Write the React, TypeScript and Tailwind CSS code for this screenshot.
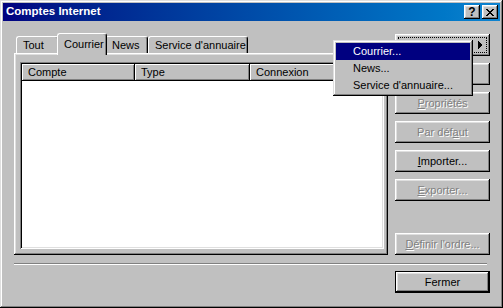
import React from 'react';

const raised =
  'shadow-[inset_-1px_-1px_#000,inset_1px_1px_#fff,inset_-2px_-2px_#808080,inset_2px_2px_#dfdfdf]';
const disabledText = 'text-[#808080] [text-shadow:1px_1px_0_#fff]';

function Tab({ label, width, selected }: { label: string; width: string; selected?: boolean }) {
  return (
    <div
      className={`${width} ${
        selected ? 'relative z-20 -mx-[2px] h-[22px] -mb-[2px] pt-[3px]' : 'h-[17px] pt-[1px]'
      } shrink-0 bg-[#c0c0c0] border-t border-l border-white border-r border-r-black rounded-t-[3px] shadow-[inset_-1px_0_#808080] pl-[6px] text-[11px] leading-[14px] whitespace-nowrap`}
    >
      {label}
    </div>
  );
}

function Button({
  children,
  disabled,
  isDefault,
  className = '',
}: {
  children: React.ReactNode;
  disabled?: boolean;
  isDefault?: boolean;
  className?: string;
}) {
  return (
    <div
      className={`w-[95px] h-[22px] shrink-0 bg-[#c0c0c0] flex items-center justify-center text-[11px] whitespace-nowrap ${raised} ${
        isDefault ? 'border border-black' : ''
      } ${disabled ? disabledText : ''} ${className}`}
    >
      {children}
    </div>
  );
}

function HeaderCell({ label, width }: { label: string; width: string }) {
  return (
    <div
      className={`${width} h-full shrink-0 flex items-center pl-[6px] text-[11px] shadow-[inset_-1px_-1px_#000,inset_1px_1px_#fff,inset_-2px_-2px_#808080]`}
    >
      {label}
    </div>
  );
}

export default function App() {
  return (
    <div className="relative w-[503px] h-[308px] bg-[#c0c0c0] p-[3px] flex flex-col font-['Liberation_Sans',Arial,sans-serif] text-black shadow-[inset_-1px_-1px_#000,inset_1px_1px_#dfdfdf,inset_-2px_-2px_#808080,inset_2px_2px_#fff]">
      {/* Title bar */}
      <div className="h-[18px] shrink-0 flex items-center bg-linear-to-r from-[#000080] to-[#1084d0] pl-[3px] pr-[2px]">
        <span className="flex-1 text-white font-bold text-[11.5px] leading-none">Comptes Internet</span>
        <div className={`w-[16px] h-[14px] bg-[#c0c0c0] ${raised} flex items-center justify-center text-[12px] font-bold leading-none pb-[1px]`}>
          ?
        </div>
        <div className={`ml-[2px] w-[16px] h-[14px] bg-[#c0c0c0] ${raised} flex items-center justify-center`}>
          <svg width="8" height="7" viewBox="0 0 8 7" shapeRendering="crispEdges">
            <path
              d="M0 0h2v1H0zM6 0h2v1H6zM1 1h2v1H1zM5 1h2v1H5zM2 2h4v1H2zM3 3h2v1H3zM2 4h4v1H2zM1 5h2v1H1zM5 5h2v1H5zM0 6h2v1H0zM6 6h2v1H6z"
              fill="#000"
            />
          </svg>
        </div>
      </div>

      {/* Body */}
      <div className="flex-1 flex flex-col pl-[11px] pr-[10px] pt-[12px]">
        <div className="flex">
          {/* Tabs + panel */}
          <div className="w-[374px] flex flex-col">
            <div className="relative z-10 flex items-end h-[20px] pl-[2px]">
              <Tab label="Tout" width="w-[43px]" />
              <Tab label="Courrier" width="w-[50px]" selected />
              <Tab label="News" width="w-[43px]" />
              <Tab label="Service d'annuaire" width="w-[100px]" />
            </div>
            <div className={`h-[202px] flex flex-col pt-[9px] pl-[6px] pr-[4px] pb-[6px] ${raised}`}>
              <div className="flex-1 flex flex-col bg-white p-[2px] shadow-[inset_1px_1px_#808080,inset_-1px_-1px_#fff,inset_2px_2px_#000,inset_-2px_-2px_#dfdfdf]">
                <div className="h-[17px] flex bg-[#c0c0c0]">
                  <HeaderCell label="Compte" width="w-[113px]" />
                  <HeaderCell label="Type" width="w-[115px]" />
                  <HeaderCell label="Connexion" width="w-[115px]" />
                  <div className="flex-1 h-full shadow-[inset_-1px_-1px_#000,inset_1px_1px_#fff,inset_-2px_-2px_#808080]" />
                </div>
              </div>
            </div>
          </div>

          {/* Right buttons */}
          <div className="ml-[7px] mt-[1px] w-[95px] flex flex-col gap-[7px]">
            <Button className="relative">
              <span>Ajouter</span>
              <div className="absolute left-[3px] top-[3px] right-[3px] bottom-[3px] border border-dotted border-black" />
              <svg className="absolute right-[7px] top-[7px]" width="5" height="8" viewBox="0 0 5 8" shapeRendering="crispEdges">
                <path d="M0 0l4 4-4 4z" fill="#000" />
              </svg>
            </Button>
            <Button disabled>Supprimer</Button>
            <Button disabled>
              <u>P</u>ropriétés
            </Button>
            <Button disabled>
              Par déf<u>a</u>ut
            </Button>
            <Button>
              <u>I</u>mporter...
            </Button>
            <Button disabled>
              <u>E</u>xporter...
            </Button>
            <Button disabled className="mt-auto">
              <u>D</u>éfinir l'ordre...
            </Button>
          </div>
        </div>

        <div className="mt-[8px] w-[473px] h-[2px] border-t border-[#808080] border-b border-b-white" />

        <div className="mt-[6px] self-end">
          <Button isDefault>Fermer</Button>
        </div>
      </div>

      {/* Popup menu */}
      <div className="absolute left-[333px] top-[40px] w-[140px] h-[56px] bg-[#c0c0c0] px-[3px] pt-[3px] shadow-[inset_-1px_-1px_#000,inset_1px_1px_#dfdfdf,inset_-2px_-2px_#808080,inset_2px_2px_#fff]">
        <div className="h-[17px] flex items-center pl-[17px] text-[11px] bg-[#000080] text-white">Courrier...</div>
        <div className="h-[17px] flex items-center pl-[17px] text-[11px]">News...</div>
        <div className="h-[17px] flex items-center pl-[17px] text-[11px]">Service d'annuaire...</div>
      </div>
    </div>
  );
}
